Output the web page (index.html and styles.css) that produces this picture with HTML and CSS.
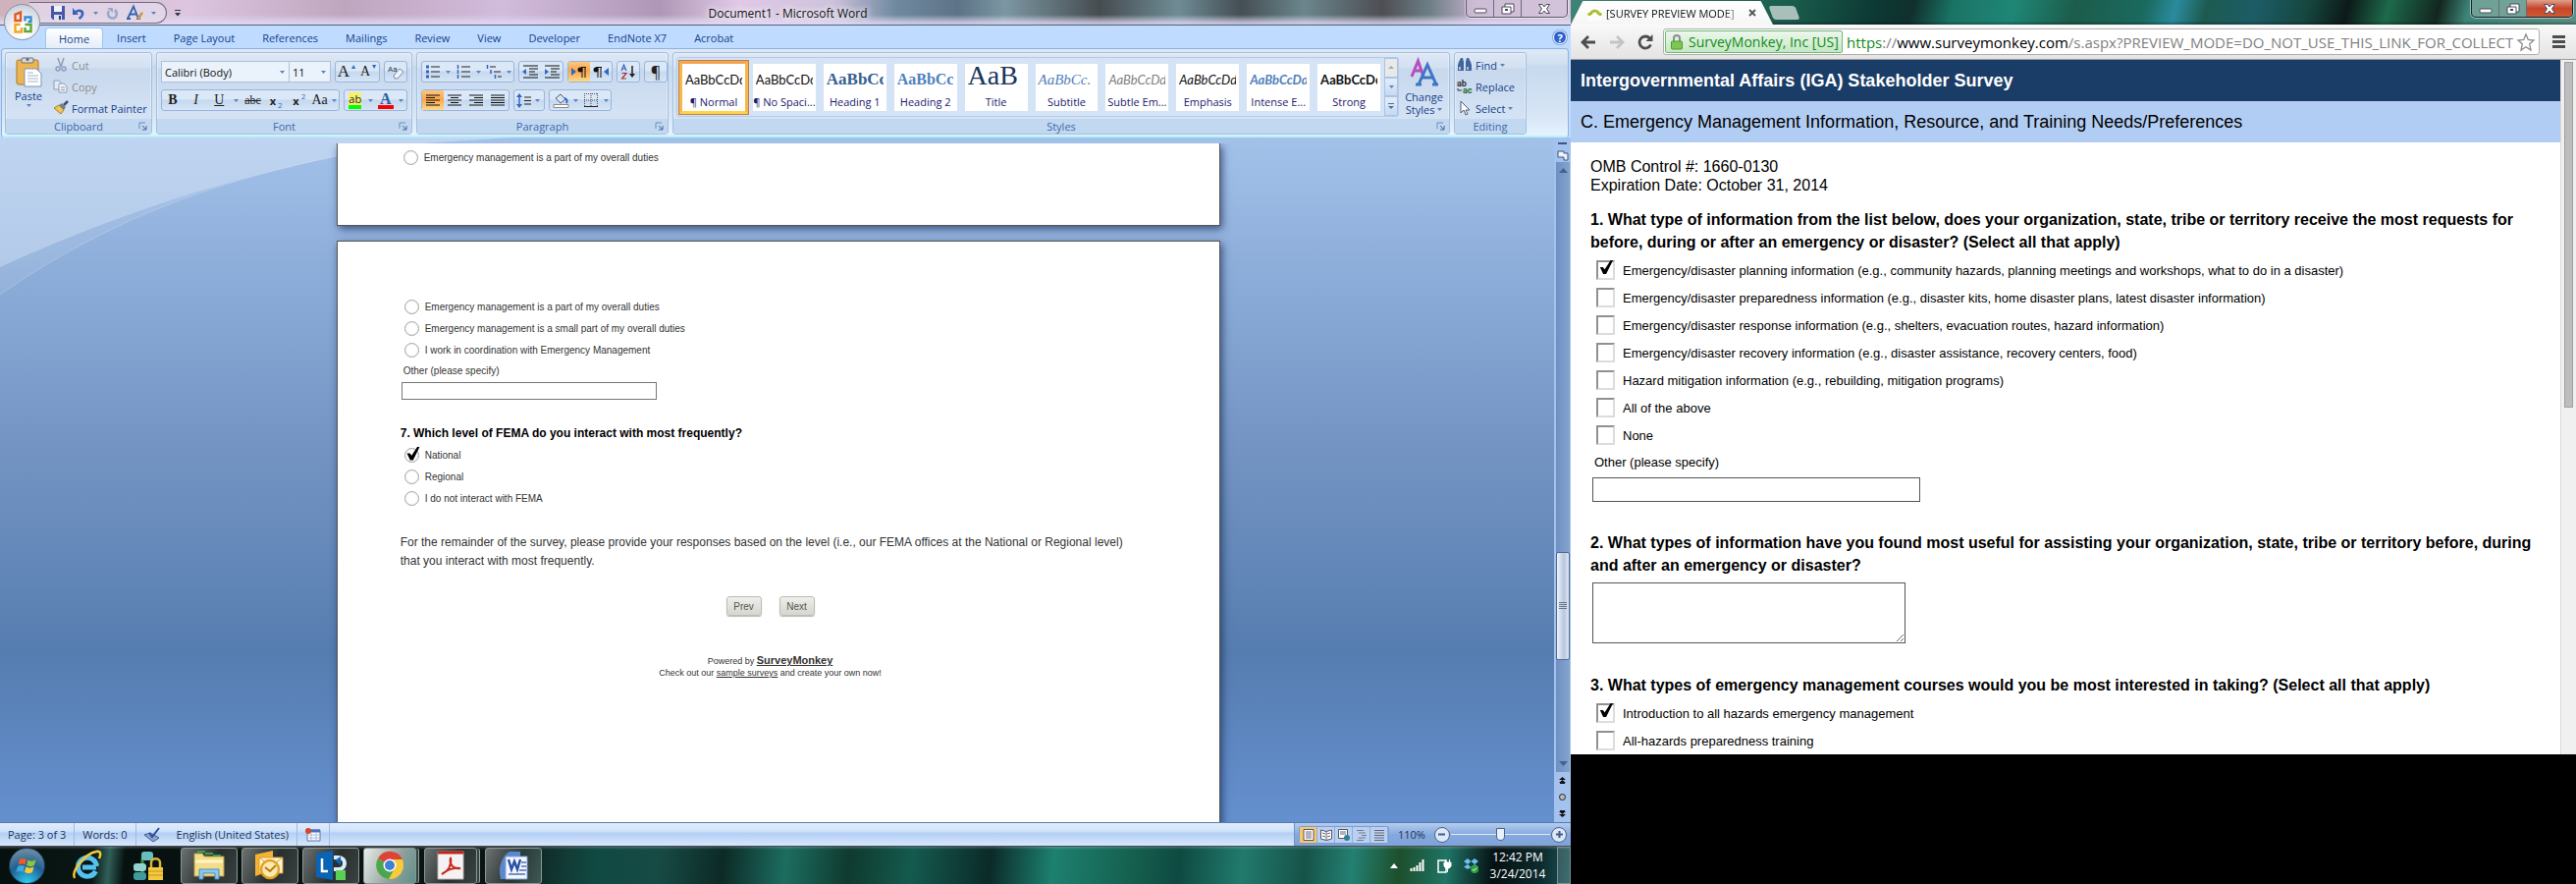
FILE: index.html
```html
<!DOCTYPE html>
<html lang="en">
<head>
    <meta charset="UTF-8">
    <meta name="viewport" content="width=device-width, initial-scale=1.0">
    <title>Document1 - Microsoft Word</title>
    <link rel="stylesheet" href="styles.css">
</head>
<body>
    <!-- shared icons -->
    <svg class="defs" aria-hidden="true">
        <symbol id="arrow" viewBox="0 0 5 3"><path d="M0 0h5L2.5 3z" fill="#5d84b8"/></symbol>
        <symbol id="launcher" viewBox="0 0 9 9"><path d="M1 7V1h6" fill="none" stroke="#6a8fbd"/><path d="M4 4l4 4M8 4v4H4" fill="none" stroke="#44668f"/></symbol>
        <symbol id="al-left" viewBox="0 0 14 12"><path d="M0 1h14M0 3.500h9M0 6h14M0 8.500h9M0 11h14" stroke="#111"/></symbol>
        <symbol id="al-center" viewBox="0 0 14 12"><path d="M0 1h14M3 3.500h8M0 6h14M3 8.500h8M0 11h14" stroke="#111"/></symbol>
        <symbol id="al-right" viewBox="0 0 14 12"><path d="M0 1h14M5 3.500h9M0 6h14M5 8.500h9M0 11h14" stroke="#111"/></symbol>
        <symbol id="al-full" viewBox="0 0 14 12"><path d="M0 1h14M0 3.500h14M0 6h14M0 8.500h14M0 11h14" stroke="#111"/></symbol>
        <symbol id="win-min" viewBox="0 0 14 12"><rect x="1" y="6" width="12" height="4" rx="1" fill="#fff" stroke="#4c4a5c"/></symbol>
        <symbol id="win-max" viewBox="0 0 14 12"><path d="M4 1h9v8h-3v2H1V4h3z" fill="#fff" stroke="#4c4a5c"/><path d="M4 4h6v5" fill="none" stroke="#4c4a5c"/><rect x="4" y="6" width="3" height="2" fill="#4c4a5c"/></symbol>
        <symbol id="win-close" viewBox="0 0 14 12"><path d="M1.500 1.500h3.500l2 2.500 2-2.500h3.500L9.500 6l3 4.500H9L7 8l-2 2.500H1.500l3-4.500z" fill="#fff" stroke="#4c4a5c"/></symbol>
    </svg>

    <div class="desktop">
        <!-- left monitor -->
        <div class="monitor-left">
            <div class="word">
                <div class="word-title">
                    <button class="office-button" aria-label="Office Button">
                        <svg viewBox="0 0 20 24" width="20" height="24">
                            <g fill="none" stroke-width="2.400">
                                <path d="M8 10H2.500V3.500L8 1.500z" stroke="#e8561b"/>
                                <path d="M12.500 10.500V6.500h6v4.500h-3" stroke="#3b8ad8"/>
                                <path d="M7.500 14H2.500v7.500H9V17" stroke="#f5a51c"/>
                                <path d="M12.500 14h6v7h-6v-4" stroke="#5da63a"/>
                            </g>
                        </svg>
                    </button>
                    <div class="qat">
                        <button aria-label="Save"><svg width="14" height="14" viewBox="0 0 14 14"><path d="M0 0h14v14H2l-2-2z" fill="#4a55a8"/><path d="M3 0h8v6H3z" fill="#eef3fb"/><path d="M3 9h8v5H3z" fill="#dce4f2"/><path d="M8 10h2v4H8z" fill="#2d3578"/></svg></button>
                        <button aria-label="Undo"><svg width="13" height="13" viewBox="0 0 13 13"><path d="M2 6c4-4 9-2 8 2-.5 2-2 3-3.500 4" fill="none" stroke="#3762b8" stroke-width="2.500"/><path d="M0 1v7h6z" fill="#3762b8"/></svg></button>
                        <svg class="arrow"><use href="#arrow"/></svg>
                        <button aria-label="Repeat"><svg width="13" height="13" viewBox="0 0 13 13"><path d="M9 3c4 4 1 9-3 8.500S1 7 3 4" fill="none" stroke="#9aa9c9" stroke-width="2.500"/><path d="M1 1h6v5z" fill="#9aa9c9"/></svg></button>
                        <button aria-label="Font colour"><svg width="17" height="16" viewBox="0 0 17 16"><path d="M1 14L7 1.500l5 12.500M3.500 9.500h6.500M0 14h4M10 14h4" fill="none" stroke="#3564ae" stroke-width="1.800"/><path d="M10 14l5-7 2 1-4 7z" fill="#c79a4a"/></svg></button>
                        <svg class="arrow"><use href="#arrow"/></svg>
                    </div>
                    <svg class="qat-more" width="6" height="7" viewBox="0 0 6 7"><path d="M0 .5h6" stroke="#334"/><path d="M0 3h6L3 6.500z" fill="#334"/></svg>
                    <h1 class="word-caption">Document1 - Microsoft Word</h1>
                    <div class="win-buttons">
                        <button aria-label="Minimize"><svg width="14" height="12"><use href="#win-min"/></svg></button>
                        <button aria-label="Restore"><svg width="14" height="12"><use href="#win-max"/></svg></button>
                        <button class="close" aria-label="Close"><svg width="14" height="12"><use href="#win-close"/></svg></button>
                    </div>
                </div>

                <nav class="tabs">
                    <button class="tab active">Home</button>
                    <button class="tab">Insert</button>
                    <button class="tab">Page Layout</button>
                    <button class="tab">References</button>
                    <button class="tab">Mailings</button>
                    <button class="tab">Review</button>
                    <button class="tab">View</button>
                    <button class="tab">Developer</button>
                    <button class="tab">EndNote X7</button>
                    <button class="tab">Acrobat</button>
                    <button class="help" aria-label="Help">?</button>
                </nav>

                <div class="ribbon">
                    <section class="group clipboard">
                        <div class="group-body">
                            <button class="big paste">
                                <svg width="27" height="31" viewBox="0 0 27 31"><rect x="1" y="3" width="22" height="25" rx="2" fill="#edb552" stroke="#a8792c"/><rect x="6" y="1" width="12" height="5" rx="1" fill="#d8d8dc" stroke="#6e6e74"/><circle cx="12" cy="2.500" r="1.500" fill="#666"/><path d="M9 12h12l5 5v13H9z" fill="#fff" stroke="#7d93b8"/><path d="M12 16h6M12 19h11M12 22h11M12 25h11" stroke="#9fb2d3"/></svg>
                                Paste
                                <svg class="arrow"><use href="#arrow"/></svg>
                            </button>
                            <div class="lines">
                                <button class="line off"><svg width="16" height="14" viewBox="0 0 16 14"><path d="M5 0l3 9M11 0L8 9" stroke="#8e9db8" stroke-width="1.500"/><circle cx="5" cy="11" r="2" fill="none" stroke="#8e9db8" stroke-width="1.500"/><circle cx="11" cy="11" r="2" fill="none" stroke="#8e9db8" stroke-width="1.500"/></svg>Cut</button>
                                <button class="line off"><svg width="16" height="14" viewBox="0 0 16 14"><path d="M1 1h5l3 3v6H1z" fill="#e4ebf5" stroke="#8e9db8"/><path d="M6 4h5l3 3v6H6z" fill="#eef2f9" stroke="#8e9db8"/><path d="M8 8h4M8 10.500h4" stroke="#8e9db8"/></svg>Copy</button>
                                <button class="line"><svg width="16" height="14" viewBox="0 0 16 14"><path d="M1 7l5-3 5 5-3 4z" fill="#efc657" stroke="#a88027"/><path d="M6 4l3-2 4 4-2 3z" fill="#777f8e"/><path d="M11 4l4-4" stroke="#3c4e75" stroke-width="2.500"/></svg>Format Painter</button>
                            </div>
                        </div>
                        <div class="group-label">Clipboard<svg class="launcher"><use href="#launcher"/></svg></div>
                    </section>

                    <section class="group font">
                        <div class="group-body rows">
                            <div class="row">
                                <div class="combo">
                                    <select class="font-name" aria-label="Font"><option>Calibri (Body)</option></select>
                                    <svg class="arrow"><use href="#arrow"/></svg>
                                    <select class="font-size" aria-label="Font size"><option>11</option></select>
                                    <svg class="arrow"><use href="#arrow"/></svg>
                                </div>
                                <div class="bar">
                                    <button class="serif big-a" aria-label="Grow font">A<sup>▴</sup></button>
                                    <button class="serif" aria-label="Shrink font">A<sup>▾</sup></button>
                                </div>
                                <div class="bar">
                                    <button aria-label="Clear formatting"><svg width="18" height="16" viewBox="0 0 18 16"><text x="1" y="8" font-size="8" font-family="Roboto" fill="#234">Aa</text><path d="M7 12l6-7 4 3-6 7H8z" fill="#f0f3fa" stroke="#7c86a8"/></svg></button>
                                </div>
                            </div>
                            <div class="row">
                                <div class="bar format">
                                    <button class="serif"><b>B</b></button>
                                    <button class="serif"><i>I</i></button>
                                    <button class="serif"><u>U</u></button>
                                    <svg class="arrow"><use href="#arrow"/></svg>
                                    <button class="serif small"><s>abc</s></button>
                                    <button><b>x</b><sub>2</sub></button>
                                    <button><b>x</b><sup>2</sup></button>
                                    <button class="serif">Aa<svg class="arrow"><use href="#arrow"/></svg></button>
                                </div>
                                <div class="bar colours">
                                    <button class="highlight" aria-label="Highlight"><span>ab</span></button>
                                    <svg class="arrow"><use href="#arrow"/></svg>
                                    <button class="text-colour" aria-label="Font color"><span>A</span></button>
                                    <svg class="arrow"><use href="#arrow"/></svg>
                                </div>
                            </div>
                        </div>
                        <div class="group-label">Font<svg class="launcher"><use href="#launcher"/></svg></div>
                    </section>

                    <section class="group paragraph">
                        <div class="group-body rows">
                            <div class="row">
                                <div class="bar lists">
                                    <button aria-label="Bullets"><svg width="14" height="14" viewBox="0 0 14 14"><path d="M5 2h9M5 7h9M5 12h9" stroke="#222"/><path d="M0 2h3M0 7h3M0 12h3" stroke="#3762b8" stroke-width="3"/></svg></button>
                                    <svg class="arrow"><use href="#arrow"/></svg>
                                    <button aria-label="Numbering"><svg width="14" height="14" viewBox="0 0 14 14"><path d="M5 2h9M5 7h9M5 12h9" stroke="#222"/><path d="M1.500 0v4M1.500 5v4M1.500 10v4" stroke="#3762b8" stroke-width="1.500"/></svg></button>
                                    <svg class="arrow"><use href="#arrow"/></svg>
                                    <button aria-label="Multilevel list"><svg width="16" height="14" viewBox="0 0 16 14"><path d="M4 2h6M8 7h7M12 12h4" stroke="#222"/><path d="M1.500 0v4M5 5v4M9.500 10v4" stroke="#3762b8" stroke-width="1.500"/></svg></button>
                                    <svg class="arrow"><use href="#arrow"/></svg>
                                </div>
                                <div class="bar">
                                    <button aria-label="Decrease indent"><svg width="16" height="14" viewBox="0 0 16 14"><path d="M1 1h15M7 4h9M7 7h6M7 10h9M1 13h15" stroke="#111"/><path d="M0 7l4-3v6z" fill="#2e68c4"/></svg></button>
                                    <button aria-label="Increase indent"><svg width="16" height="14" viewBox="0 0 16 14"><path d="M1 1h15M7 4h9M7 7h6M7 10h9M1 13h15" stroke="#111"/><path d="M5 7L1 4v6z" fill="#2e68c4"/></svg></button>
                                </div>
                                <div class="bar">
                                    <button class="on" aria-label="Left to right"><svg width="16" height="12" viewBox="0 0 16 12"><path d="M0 2l5 4-5 4z" fill="#2e68c4"/><path d="M10 1.500h5M11 1v11M14 1v11" stroke="#111"/><circle cx="9" cy="4" r="2.500" fill="#111"/></svg></button>
                                    <button aria-label="Right to left"><svg width="16" height="12" viewBox="0 0 16 12"><path d="M16 2l-5 4 5 4z" fill="#2e68c4"/><path d="M3 1.500h6M5 1v11M8 1v11" stroke="#111"/><circle cx="3" cy="4" r="2.500" fill="#111"/></svg></button>
                                </div>
                                <div class="bar">
                                    <button aria-label="Sort"><svg width="16" height="16" viewBox="0 0 16 16"><path d="M1 7l2.500-6L6 7M2 5h3" fill="none" stroke="#3762b8" stroke-width="1.200"/><path d="M1.500 9.500H6l-4.500 5.500H6" fill="none" stroke="#a2372f" stroke-width="1.200"/><path d="M12 2v10" stroke="#222" stroke-width="1.500"/><path d="M9 10h6l-3 4z" fill="#222"/></svg></button>
                                </div>
                                <div class="bar">
                                    <button class="pilcrow" aria-label="Show marks">¶</button>
                                </div>
                            </div>
                            <div class="row">
                                <div class="bar">
                                    <button class="on" aria-label="Align left"><svg width="14" height="12"><use href="#al-left"/></svg></button>
                                    <button aria-label="Center"><svg width="14" height="12"><use href="#al-center"/></svg></button>
                                    <button aria-label="Align right"><svg width="14" height="12"><use href="#al-right"/></svg></button>
                                    <button aria-label="Justify"><svg width="14" height="12"><use href="#al-full"/></svg></button>
                                </div>
                                <div class="bar">
                                    <button class="wide" aria-label="Line spacing"><svg width="15" height="15" viewBox="0 0 15 15"><path d="M3 3v9" stroke="#2e68c4" stroke-width="1.500"/><path d="M0 4l3-4 3 4zM0 11l3 4 3-4z" fill="#2e68c4"/><path d="M8 4h7M8 7.500h7M8 11h7" stroke="#222"/></svg><svg class="arrow"><use href="#arrow"/></svg></button>
                                </div>
                                <div class="bar shading">
                                    <button aria-label="Shading"><svg width="17" height="16" viewBox="0 0 17 16"><path d="M3 6l5-4 5 5-5 4z" fill="#dbe6f5" stroke="#4a5a78"/><path d="M12 6c3 1 3 3 2 5" stroke="#2e68c4" stroke-width="2" fill="none"/><path d="M1 12.500h15v3H1z" fill="#fff" stroke="#888"/></svg></button>
                                    <svg class="arrow"><use href="#arrow"/></svg>
                                    <button aria-label="Borders"><svg width="14" height="14" viewBox="0 0 14 14"><path d="M.5 0v14M7 0v14M13.500 0v14M0 .5h14M0 7h14" stroke="#555" stroke-dasharray="1 1"/><path d="M0 13.500h14" stroke="#222"/></svg></button>
                                    <svg class="arrow"><use href="#arrow"/></svg>
                                </div>
                            </div>
                        </div>
                        <div class="group-label">Paragraph<svg class="launcher"><use href="#launcher"/></svg></div>
                    </section>

                    <section class="group styles">
                        <div class="group-body">
                            <div class="gallery">
                                <button class="style selected"><span class="sample">AaBbCcDd</span><span class="name">¶ Normal</span></button>
                                <button class="style"><span class="sample">AaBbCcDd</span><span class="name">¶ No Spaci...</span></button>
                                <button class="style"><span class="sample s-h1">AaBbCc</span><span class="name">Heading 1</span></button>
                                <button class="style"><span class="sample s-h2">AaBbCc</span><span class="name">Heading 2</span></button>
                                <button class="style"><span class="sample s-title">AaB</span><span class="name">Title</span></button>
                                <button class="style"><span class="sample s-sub">AaBbCc.</span><span class="name">Subtitle</span></button>
                                <button class="style"><span class="sample s-subtle">AaBbCcDd</span><span class="name">Subtle Em...</span></button>
                                <button class="style"><span class="sample s-em">AaBbCcDd</span><span class="name">Emphasis</span></button>
                                <button class="style"><span class="sample s-intense">AaBbCcDd</span><span class="name">Intense E...</span></button>
                                <button class="style"><span class="sample s-strong">AaBbCcDd</span><span class="name">Strong</span></button>
                                <div class="gallery-scroll">
                                    <button class="dim" aria-label="Up"><svg width="6" height="3" viewBox="0 0 6 3"><path d="M0 3h6L3 0z" fill="#aaa"/></svg></button>
                                    <button aria-label="Down"><svg class="arrow"><use href="#arrow"/></svg></button>
                                    <button aria-label="More"><svg width="6" height="6" viewBox="0 0 6 6"><path d="M0 .5h6" stroke="#4a70a8"/><path d="M0 3h6L3 6z" fill="#4a70a8"/></svg></button>
                                </div>
                            </div>
                            <button class="big change">
                                <svg width="30" height="28" viewBox="0 0 30 28"><path d="M2 18L8.500 2 14 18M4 12h8" fill="none" stroke="#b44fbe" stroke-width="3"/><path d="M9 26L18 6l9 20M12 19h12M6 26h6M23 26h6" fill="none" stroke="#3f76c4" stroke-width="3"/></svg>
                                <span>Change</span>
                                <span>Styles <svg class="arrow"><use href="#arrow"/></svg></span>
                            </button>
                        </div>
                        <div class="group-label">Styles<svg class="launcher"><use href="#launcher"/></svg></div>
                    </section>

                    <section class="group editing">
                        <div class="group-body">
                            <div class="lines">
                                <button class="line"><svg width="16" height="14" viewBox="0 0 16 14"><path d="M2 4l2-4h2l1 4v9H1V7zM9 4l1-4h2l2 4 1 3v6H9z" fill="#41659c"/><path d="M3 9v3M11 9v3" stroke="#cfdcf0" stroke-width="1.500"/></svg>Find <svg class="arrow"><use href="#arrow"/></svg></button>
                                <button class="line"><svg width="16" height="14" viewBox="0 0 16 14"><text x="0" y="7" font-size="9" font-weight="700" font-family="Roboto" fill="#333">ab</text><text x="6" y="14" font-size="9" font-weight="700" font-family="Roboto" fill="#1c6b2a">ac</text><path d="M1 9v2h4" fill="none" stroke="#335"/></svg>Replace</button>
                                <button class="line"><svg width="16" height="14" viewBox="0 0 16 14"><path d="M4 0v12l3-3 2 5 2-1-2-4h4z" fill="#fff" stroke="#4a5a78"/></svg>Select <svg class="arrow"><use href="#arrow"/></svg></button>
                            </div>
                        </div>
                        <div class="group-label">Editing</div>
                    </section>
                </div>

                <div class="workspace">
                    <svg class="swoosh" width="520" height="170" viewBox="0 0 520 170">
                        <path d="M0 160C130 70 250 35 400 8L520 0H0z" fill="#fff" fill-opacity=".1"/>
                        <path d="M0 132C130 73 250 35 400 8L520 0H0z" fill="#d8e6f8" fill-opacity=".42"/>
                        <path d="M0 160C130 70 250 35 400 8" fill="none" stroke="#fff" stroke-opacity=".2"/>
                    </svg>
                    <div class="pages">
                        <article class="page first">
                            <label class="choice"><input type="radio" name="duty-prev">Emergency management is a part of my overall duties</label>
                        </article>
                        <article class="page second">
                            <label class="choice"><input type="radio" name="duty">Emergency management is a part of my overall duties</label>
                            <label class="choice"><input type="radio" name="duty">Emergency management is a small part of my overall duties</label>
                            <label class="choice"><input type="radio" name="duty">I work in coordination with Emergency Management</label>
                            <label class="other" for="duty-other">Other (please specify)</label>
                            <input class="textbox" type="text" id="duty-other">
                            <h2>7. Which level of FEMA do you interact with most frequently?</h2>
                            <label class="choice"><input type="radio" name="level" checked>National</label>
                            <label class="choice"><input type="radio" name="level">Regional</label>
                            <label class="choice"><input type="radio" name="level">I do not interact with FEMA</label>
                            <p class="note">For the remainder of the survey, please provide your responses based on the level (i.e., our FEMA offices at the National or Regional level) that you interact with most frequently.</p>
                            <div class="pager">
                                <button>Prev</button>
                                <button>Next</button>
                            </div>
                            <footer class="powered">
                                <p>Powered by <a class="brand" href="#">SurveyMonkey</a></p>
                                <p>Check out our <a href="#">sample surveys</a> and create your own now!</p>
                            </footer>
                        </article>
                    </div>
                    <div class="word-scroll">
                        <span class="split"></span>
                        <button class="ruler" aria-label="View ruler"><svg width="12" height="12" viewBox="0 0 12 12"><path d="M1 2h6v2h4v7H7V8H1z" fill="#eef3fb" stroke="#3d5580"/></svg></button>
                        <div class="track">
                            <svg width="9" height="5" viewBox="0 0 9 5"><path d="M0 5h9L4.500 0z" fill="#47618f"/></svg>
                            <div class="thumb"><i></i></div>
                            <svg width="9" height="5" viewBox="0 0 9 5"><path d="M0 0h9L4.500 5z" fill="#47618f"/></svg>
                        </div>
                        <button aria-label="Previous page"><svg width="7" height="7" viewBox="0 0 7 7"><path d="M3.500 0L7 3H0zM3.500 3L7 6H0zM1 6h5v1H1z" fill="#111"/></svg></button>
                        <button aria-label="Browse object"><svg width="7" height="7" viewBox="0 0 7 7"><circle cx="3.500" cy="3.500" r="3" fill="#bbb" stroke="#222"/></svg></button>
                        <button aria-label="Next page"><svg width="7" height="7" viewBox="0 0 7 7"><path d="M3.500 7L7 4H0zM3.500 4L7 1H0zM1 0h5v1H1z" fill="#111"/></svg></button>
                    </div>
                </div>

                <div class="statusbar">
                    <span class="cell">Page: 3 of 3</span>
                    <span class="cell">Words: 0</span>
                    <span class="cell proof"><svg width="17" height="14" viewBox="0 0 17 14"><path d="M0 7l6-2 9 5-6 4z" fill="#8fa6cf" stroke="#44598a"/><path d="M5 5l3 4 7-9" fill="none" stroke="#2c4f9c" stroke-width="2"/></svg></span>
                    <span class="cell">English (United States)</span>
                    <span class="cell"><svg width="16" height="14" viewBox="0 0 16 14"><path d="M2 2h13v11H2z" fill="#fff" stroke="#5c77a8"/><path d="M2 3h13" stroke="#4a6fb5" stroke-width="3"/><path d="M2 7h13M2 10h13M6 4v9M11 4v9" stroke="#a9bbd9"/><circle cx="3" cy="3" r="3" fill="#d8452c"/></svg></span>
                    <div class="view-tools">
                        <div class="views">
                            <button class="on" aria-label="Print layout"><svg width="12" height="12" viewBox="0 0 12 12"><path d="M1 .5h10v11H1z" fill="#fff" stroke="#556"/><path d="M3 3h6M3 5h6M3 7h6M3 9h6" stroke="#667"/></svg></button>
                            <button aria-label="Reading"><svg width="12" height="12" viewBox="0 0 12 12"><path d="M.5 1l5.500 1.500L11.500 1v9L6 11.500.5 10z" fill="#fff" stroke="#556"/><path d="M6 2v9M2 4l3 1M2 7l3 1M7 5l3-1M7 8l3-1" stroke="#667"/></svg></button>
                            <button aria-label="Web layout"><svg width="12" height="12" viewBox="0 0 12 12"><path d="M.5 .5h9v9h-9z" fill="#fff" stroke="#556"/><path d="M2 3h6M2 5h6" stroke="#667"/><circle cx="9" cy="9" r="3" fill="#2f7f9c"/></svg></button>
                            <button aria-label="Outline"><svg width="12" height="12" viewBox="0 0 12 12"><path d="M1 1.500h7M3 4h7M6 6.500h5M3 9h7M1 11.500h7" stroke="#778"/></svg></button>
                            <button aria-label="Draft"><svg width="12" height="12" viewBox="0 0 12 12"><path d="M1 1.500h10M1 4h10M1 6.500h10M1 9h10M1 11.500h10" stroke="#667"/></svg></button>
                        </div>
                        <span class="zoom-value">110%</span>
                        <button class="round" aria-label="Zoom out"><svg width="9" height="9" viewBox="0 0 9 9"><path d="M1 4.500h7" stroke="#445a80" stroke-width="2"/></svg></button>
                        <input class="zoom" type="range" min="0" max="100" value="50" aria-label="Zoom">
                        <button class="round" aria-label="Zoom in"><svg width="9" height="9" viewBox="0 0 9 9"><path d="M1 4.500h7M4.500 1v7" stroke="#445a80" stroke-width="2"/></svg></button>
                    </div>
                </div>
            </div>

            <div class="taskbar">
                <button class="start" aria-label="Start"><svg width="22" height="22" viewBox="0 0 22 22"><path d="M3 5c2-1.500 5-1.500 7 0L8.500 10.500c-2-1.500-4.500-1.500-7 0z" fill="#f05a28"/><path d="M11.500 5.500c2 1.500 5 1.500 8 0L18 11c-2.500 1.500-5 1.500-8 0z" fill="#8cc63e"/><path d="M1 12c2.500-1.500 5-1.500 7 0l-1.500 6c-2-1.500-4.500-1.500-7 0z" fill="#3ea9e0"/><path d="M9.500 12.500c2.500 1.500 5 1.500 8 0L16 18c-2.500 1.500-5 1.500-8 0z" fill="#fdc82f"/></svg></button>
                <button class="launch" aria-label="Internet Explorer"><svg width="32" height="32" viewBox="0 0 32 32"><path d="M25 18H11M24.500 22a9.500 9.500 0 1 1 1-5" fill="none" stroke="#53c2f0" stroke-width="5"/><path d="M3 29C-1 22 14 4 25 2c5-1 5 3 3 7" fill="none" stroke="#f7c832" stroke-width="2.500"/></svg></button>
                <button class="launch" aria-label="Network lock"><svg width="32" height="32" viewBox="0 0 32 32"><path d="M10 9v16" stroke="#3a8f3e" stroke-width="3"/><rect x="9" y="2" width="12" height="9" rx="3" fill="#68bdbd"/><rect x="1" y="14" width="13" height="8" rx="3" fill="#8fd4d0"/><rect x="1" y="23" width="13" height="8" rx="3" fill="#3e9c9c"/><path d="M19 19v-6c0-5 9-5 9 0v6" fill="none" stroke="#d8b43a" stroke-width="2.500"/><rect x="16" y="18" width="15" height="13" fill="#f4c93c"/><path d="M16 22h15M16 26h15" stroke="#c4952a"/></svg></button>
                <button class="task" aria-label="Explorer"><svg width="34" height="32" viewBox="0 0 34 32"><path d="M2 4h8l2 3h20v20H2z" fill="#f3dc8a" stroke="#b99b46"/><path d="M5 2h8M13 4h8M21 6h8" stroke="#3f9e4a" stroke-width="2"/><path d="M3 12h28" stroke="#fff3c0" stroke-width="3"/><path d="M7 30V20h20v10h-4v-6H11v6z" fill="#8cc8ee" stroke="#4b8cc0"/></svg></button>
                <button class="task" aria-label="Outlook"><svg width="34" height="32" viewBox="0 0 34 32"><path d="M2 5l18-4v20L2 27z" fill="#f6b330"/><path d="M6 8h24v16H6z" fill="#fff6da" stroke="#d99a26"/><path d="M6 8l12 9 12-9" fill="none" stroke="#d99a26"/><circle cx="17" cy="20" r="9" fill="#fde9b0" stroke="#e3a021" stroke-width="2.500"/><path d="M12 18l5 4 6-6" fill="none" stroke="#b77a18" stroke-width="2"/></svg></button>
                <button class="task" aria-label="Lync"><svg width="32" height="32" viewBox="0 0 32 32"><path d="M1 4l17-3v30L1 28z" fill="#0a64b5"/><path d="M7 9v13h6" fill="none" stroke="#fff" stroke-width="2.500"/><path d="M19 8h5c8 0 8 12 0 12h-5" fill="none" stroke="#dcecfb" stroke-width="4"/><path d="M20 11l6-4v9z" fill="#0a64b5"/><path d="M21 21h10v10H21z" fill="#5ccf52"/></svg></button>
                <button class="task stack lit" aria-label="Chrome"><svg width="30" height="30" viewBox="0 0 30 30"><circle cx="15" cy="15" r="14" fill="#f7cb3a"/><path d="M15 15L3 8A14 14 0 0 1 28 9H15z" fill="#dc4437"/><path d="M15 15L3 8a14 14 0 0 0 11 21l6-11z" fill="#4aa651"/><circle cx="15" cy="15" r="6.500" fill="#fff"/><circle cx="15" cy="15" r="5" fill="#3f7fd6"/></svg></button>
                <button class="task stack" aria-label="Adobe Reader"><svg width="28" height="30" viewBox="0 0 28 30"><path d="M1 1h26v28H1z" fill="#f4f2f2" stroke="#b8b4b4"/><path d="M1 2h26" stroke="#c0241c" stroke-width="3"/><path d="M5 24c8-4 10-11 9-17-2 8 4 12 10 11-6-1-13 1-19 6z" fill="none" stroke="#c9281f" stroke-width="2"/></svg></button>
                <button class="task" aria-label="Word"><svg width="32" height="30" viewBox="0 0 32 30"><path d="M3 29C0 17 4 6 12 1h11v28z" fill="#5b87d0"/><path d="M8 6h22v23H8z" fill="#f4f7fd" stroke="#7f9ed4"/><path d="M11 9l3 10 3-8 3 8 3-10" fill="none" stroke="#2a52a4" stroke-width="2.500"/><path d="M24 12h5M24 16h5M22 20h7M11 24h17" stroke="#4a70bc" stroke-width="1.500"/></svg></button>
                <div class="tray">
                    <svg width="8" height="5" viewBox="0 0 8 5"><path d="M0 5h8L4 0z" fill="#fff"/></svg>
                    <svg width="16" height="12" viewBox="0 0 16 12"><path d="M1.500 12v-3M4.500 12v-4M7.500 12V6M10.500 12V3M13.500 12V0" stroke="#fff" stroke-width="2"/></svg>
                    <svg width="15" height="15" viewBox="0 0 15 15"><path d="M1 2h8v12H1z" fill="none" stroke="#fff" stroke-width="1.500"/><path d="M7 4h7v4l-2 2H9L7 8zM8.500 1v3M12.500 1v3M10.500 10v4" fill="#fff" stroke="#fff"/></svg>
                    <svg width="15" height="15" viewBox="0 0 15 15"><path d="M4 0l3.500 3L4 6 0 3zM11 0l4 3-4 3-3.500-3zM4 6l3.500 3L4 11 0 8.500zM11 6l4 2.500-4 2.500-3.500-2z" fill="#6cc0f2"/><circle cx="11" cy="11" r="4" fill="#2ea33a"/><path d="M9 11l1.500 1.500L13 9.500" fill="none" stroke="#fff"/></svg>
                    <time class="clock"><span>12:42 PM</span><span>3/24/2014</span></time>
                    <button class="show-desktop" aria-label="Show desktop"></button>
                </div>
            </div>
        </div>

        <!-- right monitor -->
        <div class="monitor-right">
            <div class="browser">
                <div class="browser-top">
                    <div class="browser-tab">
                        <svg width="15" height="15" viewBox="0 0 15 15"><rect width="15" height="15" rx="2" fill="#fdfdfd"/><path d="M3.500 9a4 4 0 0 1 8 0" fill="none" stroke="#a9bf33" stroke-width="3"/><circle cx="2" cy="8.500" r="1.800" fill="#a9bf33"/><circle cx="13" cy="8.500" r="1.800" fill="#a9bf33"/></svg>
                        <span class="tab-text">[SURVEY PREVIEW MODE]</span>
                        <button aria-label="Close tab"><svg width="8" height="8" viewBox="0 0 8 8"><path d="M1 1l6 6M7 1L1 7" stroke="#555" stroke-width="1.800"/></svg></button>
                    </div>
                    <button class="new-tab" aria-label="New tab"></button>
                    <div class="win-buttons red">
                        <button aria-label="Minimize"><svg width="14" height="12"><use href="#win-min"/></svg></button>
                        <button aria-label="Restore"><svg width="14" height="12"><use href="#win-max"/></svg></button>
                        <button class="close" aria-label="Close"><svg width="14" height="12"><use href="#win-close"/></svg></button>
                    </div>
                </div>
                <div class="toolbar">
                    <button aria-label="Back"><svg width="16" height="14" viewBox="0 0 16 14"><path d="M15 7H3M8 1L2 7l6 6" fill="none" stroke="#4d4d4d" stroke-width="2.800"/></svg></button>
                    <button aria-label="Forward"><svg width="16" height="14" viewBox="0 0 16 14"><path d="M1 7h12M8 1l6 6-6 6" fill="none" stroke="#c3c3c3" stroke-width="2.800"/></svg></button>
                    <button aria-label="Reload"><svg width="16" height="16" viewBox="0 0 16 16"><path d="M12.500 4A6 6 0 1 0 13.500 10.500" fill="none" stroke="#4d4d4d" stroke-width="2.800"/><path d="M15.500 0v7h-7z" fill="#4d4d4d"/></svg></button>
                    <div class="omnibox">
                        <span class="badge"><svg width="12" height="16" viewBox="0 0 12 16"><path d="M3 8V4c0-4 6-4 6 0v4" fill="none" stroke="#8d8d8d" stroke-width="2"/><rect x=".5" y="7" width="11" height="8" rx="1" fill="#7fc552" stroke="#4f9a30"/></svg>SurveyMonkey, Inc [US]</span>
                        <a class="url" href="#"><em>https</em>://<b>www.surveymonkey.com</b>/s.aspx?PREVIEW_MODE=DO_NOT_USE_THIS_LINK_FOR_COLLECTION</a>
                        <svg width="18" height="18" viewBox="0 0 18 18"><path d="M9 1l2.300 5.500 5.700.5-4.300 3.800L14 17l-5-3.200L4 17l1.300-6.200L1 7l5.700-.5z" fill="#fff" stroke="#8a8a8a" stroke-width="1.300"/></svg>
                    </div>
                    <button aria-label="Menu"><svg width="13" height="13" viewBox="0 0 13 13"><path d="M0 1.500h13M0 6.500h13M0 11.500h13" stroke="#4d4d4d" stroke-width="3"/></svg></button>
                </div>
                <div class="viewport">
                    <main class="survey">
                        <h1>Intergovernmental Affairs (IGA) Stakeholder Survey</h1>
                        <h2>C. Emergency Management Information, Resource, and Training Needs/Preferences</h2>
                        <div class="questions">
                            <p class="omb">OMB Control #: 1660-0130<br>Expiration Date: October 31, 2014</p>
                            <h3>1. What type of information from the list below, does your organization, state, tribe or territory receive the most requests for before, during or after an emergency or disaster? (Select all that apply)</h3>
                            <label class="check"><input type="checkbox" checked>Emergency/disaster planning information (e.g., community hazards, planning meetings and workshops, what to do in a disaster)</label>
                            <label class="check"><input type="checkbox">Emergency/disaster preparedness information (e.g., disaster kits, home disaster plans, latest disaster information)</label>
                            <label class="check"><input type="checkbox">Emergency/disaster response information (e.g., shelters, evacuation routes, hazard information)</label>
                            <label class="check"><input type="checkbox">Emergency/disaster recovery information (e.g., disaster assistance, recovery centers, food)</label>
                            <label class="check"><input type="checkbox">Hazard mitigation information (e.g., rebuilding, mitigation programs)</label>
                            <label class="check"><input type="checkbox">All of the above</label>
                            <label class="check"><input type="checkbox">None</label>
                            <label class="check-other" for="info-other">Other (please specify)</label>
                            <input class="textbox" type="text" id="info-other">
                            <h3><label for="useful">2. What types of information have you found most useful for assisting your organization, state, tribe or territory before, during and after an emergency or disaster?</label></h3>
                            <textarea id="useful"></textarea>
                            <h3>3. What types of emergency management courses would you be most interested in taking? (Select all that apply)</h3>
                            <label class="check"><input type="checkbox" checked>Introduction to all hazards emergency management</label>
                            <label class="check"><input type="checkbox">All-hazards preparedness training</label>
                        </div>
                    </main>
                    <div class="page-scroll"><div class="page-thumb"></div></div>
                </div>
            </div>
        </div>
    </div>
</body>
</html>
```
FILE: styles.css
```css
* {
    margin: 0;
    padding: 0;
    box-sizing: border-box;
}

body {
    font-family: "Open Sans", "Noto Sans", sans-serif;
    font-size: 11px;
    background: #000;
    color: #15428b;
}

button, input, select, textarea {
    font: inherit;
    color: inherit;
    border: 0;
    background: none;
    border-radius: 0;
}

button {
    display: flex;
    align-items: center;
    justify-content: center;
    white-space: nowrap;
}

svg {
    flex: none;
    overflow: visible;
}

.defs {
    position: absolute;
    width: 0;
    height: 0;
}

.arrow {
    width: 5px;
    height: 3px;
}

.desktop {
    display: grid;
    grid-template-columns: 25fr 16fr;
    height: 100vh;
    overflow: hidden;
}

.monitor-left {
    display: flex;
    flex-direction: column;
    min-width: 0;
    min-height: 0;
}

/* ---------- Word ---------- */

.word {
    flex: 1;
    display: flex;
    flex-direction: column;
    min-height: 0;
    background: #bfdbff;
}

.word-title {
    position: relative;
    display: flex;
    height: 26px;
    padding-left: 30px;
    background:
        linear-gradient(rgba(255, 255, 255, 0.1) 60%, rgba(226, 220, 244, 0.8) 92%),
        linear-gradient(90deg, #c9a9b4 0, #d9bfdc 12%, #b89cb8 22%, #cdb4d8 32%, #a58cae 42%, #dcc3e4 47%, #c9bcd8 53%, #5f7c95 57%, #4b6379 61%, #6d8b98 64%, #30383c 70%, #5f7f8a 75%, #2f3a40 79%, #5a7880 83%, #393a40 88%, #5d7078 91%, #b9a6c4 94%, #cdbbd4 100%);
    border-bottom: 1px solid #57617c;
}

.office-button {
    position: absolute;
    left: 4px;
    top: 4px;
    z-index: 1;
    width: 37px;
    height: 37px;
    border-radius: 50%;
    background: radial-gradient(circle at 50% 75%, #fff 20%, #dfe3ea 60%, #b9c1ce);
    border: 1px solid #8791a5;
}

.qat {
    display: flex;
    align-items: center;
    gap: 8px;
    height: 22px;
    margin-top: 2px;
    padding: 0 10px 0 22px;
    border: 1px solid #6d6f80;
    border-left: 0;
    border-radius: 0 11px 11px 0;
    background: rgba(228, 219, 236, 0.75);
}

.qat-more {
    margin: 10px 0 0 8px;
}

.word-caption {
    flex: 1;
    padding: 5px 72px 0 0;
    font-size: 12px;
    font-weight: 400;
    line-height: 18px;
    text-align: center;
    color: #111;
    text-shadow: 0 0 6px #fff, 0 0 8px #fff;
}

.win-buttons {
    display: flex;
    height: 18px;
    margin-right: 3px;
    border: 1px solid #5d566c;
    border-top: 0;
    border-radius: 0 0 5px 5px;
    background: rgba(214, 196, 220, 0.6);
    box-shadow: 0 0 0 1px rgba(255, 255, 255, 0.5);
    overflow: hidden;
}

.win-buttons button {
    width: 28px;
    border-right: 1px solid #6f687e;
}

.win-buttons .close {
    width: 46px;
    border-right: 0;
}

.tabs {
    display: flex;
    height: 23px;
    padding: 2px 4px 0 46px;
}

.tab {
    padding: 0 14px;
}

.tab.active {
    background: linear-gradient(#fff, #e3edf9);
    border: 1px solid #9cc8ea;
    border-bottom: 0;
    border-radius: 4px 4px 0 0;
    padding: 0 13px;
}

.help {
    width: 14px;
    height: 14px;
    margin: 3px 0 0 auto;
    border-radius: 50%;
    border: 1px solid #fff;
    background: #2b5fd0;
    box-shadow: 0 0 0 1px #8aa5d6;
    color: #fff;
    font-weight: 700;
}

.ribbon {
    display: flex;
    gap: 4px;
    height: 91px;
    margin: 0 2px 0 1px;
    padding: 3px 42px 1px 3px;
    background: linear-gradient(#dfe9f5 0, #cfdff0 18%, #c6d9ee 20%, #d9e7f6 80%, #e4f3ff);
    border: 1px solid #8db2e3;
    border-bottom: 2px solid #b9f0fb;
    border-radius: 4px;
    box-shadow: 0 1px 0 #8fb0d8;
}

.group {
    display: flex;
    flex-direction: column;
    border: 1px solid #a3c0df;
    border-radius: 3px;
    background: linear-gradient(#dee8f5 0, #d3e0f1 18%, #c8d8ed 20%, #d8e6f6);
    box-shadow: inset 0 0 0 1px rgba(255, 255, 255, 0.35);
    min-width: 0;
}

.group-body {
    flex: 1;
    display: flex;
}

.group-body.rows {
    flex-direction: column;
    gap: 7px;
    padding: 8px 4px 0 4px;
}

.group-label {
    position: relative;
    height: 15px;
    line-height: 16px;
    text-align: center;
    background: #c1d8f0;
    color: #3e6aaa;
}

.launcher {
    position: absolute;
    right: 4px;
    top: 3px;
    width: 9px;
    height: 9px;
}

.clipboard { width: 150px; }
.font { width: 261px; }
.paragraph { width: 257px; }
.styles { flex: 1; }
.editing { width: 74px; }

.big {
    flex-direction: column;
    justify-content: flex-start;
    line-height: 13px;
}

.paste {
    width: 46px;
    padding-top: 4px;
    gap: 2px;
}

.lines {
    display: flex;
    flex-direction: column;
    padding: 1px 0 0 2px;
}

.line {
    height: 22px;
    justify-content: flex-start;
    gap: 3px;
}

.line.off {
    color: #8d8d8d;
}

.row {
    display: flex;
    gap: 4px;
    height: 22px;
}

.combo {
    display: flex;
    align-items: center;
    width: 178px;
    background: #eaf2fb;
    border: 1px solid #abc1de;
    color: #111;
}

.combo select {
    appearance: none;
    height: 20px;
    padding-left: 3px;
}

.combo .arrow {
    margin-right: 4px;
}

.font-name {
    flex: 1;
}

.font-size {
    width: 33px;
    border-left: 1px solid #abc1de;
}

.bar {
    display: flex;
    align-items: center;
    border: 1px solid #98b6db;
    border-radius: 3px;
    background: linear-gradient(#dbe8f7 45%, #c5d8ef 50%, #d6e5f6);
    color: #222;
}

.bar button {
    height: 20px;
    min-width: 22px;
    gap: 2px;
}

.bar .arrow {
    margin: 0 2px;
}

.bar .on {
    background: linear-gradient(#fbc77e, #fda64a 45%, #fbd98c);
}

.bar sup, .bar sub {
    font-size: 8px;
    color: #2e68c4;
}

.bar sup { align-self: flex-start; }
.bar sub { align-self: flex-end; }

.serif {
    font-family: "Liberation Serif", serif;
    font-size: 14px;
}

.bar .small {
    font-size: 12px;
}

.bar .big-a {
    font-size: 17px;
}

.format {
    width: 184px;
    justify-content: space-between;
}

.colours {
    width: 66px;
}

.highlight span {
    height: 17px;
    line-height: 13px;
    border-bottom: 4px solid #00ff00;
    background: #f7f06d;
}

.text-colour span {
    width: 16px;
    height: 17px;
    line-height: 14px;
    font-family: "Liberation Serif", serif;
    font-size: 16px;
    font-weight: 700;
    border-bottom: 4px solid #ff0000;
    color: #2d579f;
}

.lists {
    width: 98px;
}

.pilcrow {
    font-size: 16px;
}

.bar .wide {
    width: 30px;
}

.gallery {
    display: flex;
    flex: 1;
    align-items: center;
    height: 61px;
    margin: 4px 0 0 3px;
    padding-left: 1px;
    border: 1px solid #b3cbea;
    border-radius: 3px;
    background: #d4e4f6;
    min-width: 0;
}

.style {
    flex-direction: column;
    justify-content: flex-start;
    flex: 1;
    min-width: 0;
    max-width: 72px;
    height: 56px;
    border: 4px solid transparent;
    background: #fff padding-box;
    color: #111;
    overflow: hidden;
}

.style.selected {
    border-color: #f3a64f #f8b54a #ffd34a #f8b54a;
    outline: 1px solid #b9824a;
    outline-offset: -1px;
}

.sample {
    width: 58px;
    height: 30px;
    padding-top: 4px;
    line-height: 24px;
    overflow: hidden;
    font-family: Lato, sans-serif;
    font-size: 13px;
    text-align: left;
}

.name {
    line-height: 18px;
    color: #1a1a6c;
}

.s-h1, .s-h2, .s-title, .s-sub {
    font-family: "Liberation Serif", "DejaVu Serif", serif;
}

.s-h1 { font-size: 17px; font-weight: 700; color: #365f91; }
.s-h2 { font-size: 16px; font-weight: 700; color: #4f81bd; }
.s-title { font-size: 28px; padding-top: 0; color: #17365d; }
.s-sub { font-size: 15px; font-style: italic; color: #4f81bd; }
.s-subtle { font-style: italic; color: #808080; }
.s-em { font-style: italic; }
.s-intense { font-style: italic; font-weight: 700; color: #4f81bd; }
.s-strong { font-weight: 700; }

.gallery-scroll {
    display: flex;
    flex-direction: column;
    width: 14px;
    height: 59px;
    margin-left: auto;
}

.gallery-scroll button {
    flex: 1;
    border: 1px solid #aac4e4;
    background: linear-gradient(#e4eefa, #c6d9f1);
}

.gallery-scroll .dim {
    background: #e9e9e9;
}

.change {
    width: 51px;
    padding-top: 6px;
}

.change svg:first-child {
    margin-bottom: 4px;
}

.change .arrow {
    vertical-align: middle;
}

/* ---------- document ---------- */

.workspace {
    position: relative;
    flex: 1;
    display: flex;
    min-height: 0;
    padding-top: 6px;
    background: linear-gradient(#a3c2ea, #8aaad7 22%, #7394c3 46%, #567db0 75%, #6590cf);
    border-bottom: 1px solid #567db1;
    overflow: hidden;
}

.swoosh {
    position: absolute;
    left: 0;
    top: 0;
}

.pages {
    position: relative;
    flex: 1;
    display: flex;
    flex-direction: column;
    align-items: center;
    gap: 15px;
    padding-left: 3px;
    overflow: hidden;
}

.page {
    flex: none;
    width: 57%;
    background: #fff;
    border: 1px solid #555;
    box-shadow: 2px 3px 8px rgba(20, 40, 80, 0.7);
    font-family: "Liberation Sans", Arial, sans-serif;
    font-size: 10px;
    color: #333;
}

.first {
    height: 84px;
    padding: 3px 67px;
    border-top: 0;
}

.second {
    min-height: 700px;
    padding: 55px 64px;
}

.choice {
    display: flex;
    align-items: center;
    gap: 6px;
    height: 22px;
}

.choice input {
    appearance: none;
    width: 15px;
    height: 15px;
    margin-left: 4px;
    border: 1px solid #a5a5a5;
    border-radius: 50%;
    background: radial-gradient(#fff 50%, #e2e2e2);
}

.first .choice input {
    margin-left: 0;
}

.choice input:checked::before,
.check input:checked::before {
    content: "";
    display: block;
    width: 15px;
    height: 14px;
    margin-top: -2px;
    background: #000;
    clip-path: polygon(12% 50%, 32% 50%, 44% 66%, 84% 0, 100% 0, 54% 100%, 34% 100%);
}

.other {
    display: block;
    padding-left: 3px;
    line-height: 22px;
}

.textbox {
    display: block;
    border: 1px solid #777;
}

.second .textbox {
    width: 260px;
    height: 18px;
    margin-left: 1px;
}

.second h2 {
    margin-top: 23px;
    font-size: 12px;
    line-height: 22px;
    color: #000;
}

.note {
    max-width: 750px;
    margin-top: 25px;
    font-size: 12px;
    line-height: 19px;
}

.pager {
    display: flex;
    justify-content: center;
    gap: 18px;
    margin: 26px 17px 0 0;
}

.pager button {
    width: 36px;
    height: 20px;
    border: 1px solid #bdbdb5;
    border-radius: 3px;
    background: linear-gradient(#efefeb, #d6d6cf);
    box-shadow: 0 1px 1px #bbb;
    color: #555;
}

.powered {
    margin: 39px 17px 0 0;
    font-size: 9px;
    line-height: 12px;
    text-align: center;
}

.powered a {
    color: inherit;
}

.powered .brand {
    font-size: 11px;
    font-weight: 700;
}

.word-scroll {
    display: flex;
    flex-direction: column;
    width: 17px;
    margin-top: -6px;
    background: #a4c2ee;
}

.split {
    width: 9px;
    height: 2px;
    margin: 5px 4px 4px;
    background: #3d5580;
}

.word-scroll button {
    height: 17px;
}

.word-scroll .ruler {
    height: 13px;
}

.track {
    flex: 1;
    display: flex;
    flex-direction: column;
    align-items: center;
    margin: 1px 1px 0 2px;
    padding: 6px 0;
    background: linear-gradient(90deg, #6e90c2, #84a4cf);
}

.thumb {
    display: flex;
    align-items: center;
    justify-content: center;
    width: 14px;
    height: 18%;
    margin: auto 0 103px;
    border: 1px solid #56698f;
    border-radius: 2px;
    background: linear-gradient(90deg, #eef2f8, #b6c7df 60%, #dfe7f2);
}

.thumb i {
    width: 8px;
    height: 8px;
    background: repeating-linear-gradient(#6d7686 0 1px, transparent 1px 2px);
}

.statusbar {
    display: flex;
    height: 23px;
    background: linear-gradient(#e2edfc 0, #d0e2fb 35%, #b4cff5 45%, #d7e7fc);
    color: #1d3457;
}

.cell {
    display: flex;
    align-items: center;
    padding: 0 8px;
    border-right: 1px solid #9cbce8;
}

.proof {
    border-right: 0;
}

.view-tools {
    display: flex;
    align-items: center;
    gap: 9px;
    width: 282px;
    margin-left: auto;
    padding: 0 4px;
    background: linear-gradient(#b5cdf0, #86a9dd 50%, #7ea3da);
    border-left: 1px solid #6f94cc;
}

.views {
    display: flex;
    border: 1px solid #7c9dcf;
    border-radius: 2px;
    background: #b9d0f1;
}

.views button {
    width: 18px;
    height: 16px;
    border-right: 1px solid #8eaddb;
}

.views .on {
    background: #fbc66b;
}

.round {
    flex: none;
    width: 16px;
    height: 16px;
    border: 1px solid #4a628c;
    border-radius: 50%;
    background: #dce8f8;
}

.zoom {
    appearance: none;
    flex: 1;
    min-width: 0;
    height: 14px;
    margin: 0 -8px;
    background: linear-gradient(#dfeafa, #dfeafa) center / 100% 1px no-repeat;
}

.zoom::-webkit-slider-thumb {
    appearance: none;
    width: 9px;
    height: 13px;
    background: #e8f0fb;
    border: 1px solid #4a628c;
    border-radius: 1px 1px 5px 5px;
}

/* ---------- taskbar ---------- */

.taskbar {
    display: flex;
    align-items: center;
    height: 39px;
    padding-left: 9px;
    border-top: 1px solid #444c55;
    background:
        linear-gradient(rgba(255, 255, 255, 0.2), transparent 8%),
        linear-gradient(95deg, #06100e 0, #0a1715 6%, #2f5f57 7%, #07110f 8%, #0a1513 32%, #123a35 36%, #0f4a42 38%, #174a44 42%, #0c2a26 46%, #1c6d60 50%, #0f3a2f 54%, #145a4e 58%, #0b2a28 63%, #1d8070 67%, #15604f 72%, #0e4a41 75%, #217a6d 79%, #165348 83%, #238072 86%, #1d4f2c 89%, #1f7466 92%, #061012 95%, #0c2b2e 98%, #1c555a);
}

.start {
    width: 37px;
    height: 37px;
    border-radius: 50%;
    background: radial-gradient(circle at 50% 100%, #2fd0f4, #1f5f94 50%, #6a8ba0 85%);
    border: 1px solid #1d3c55;
}

.launch {
    width: 62px;
}

.start + .launch {
    margin-left: 12px;
}

.task {
    width: 58px;
    height: 37px;
    margin-right: 4px;
    border: 1px solid #8b9692;
    border-radius: 3px;
    background: linear-gradient(115deg, rgba(255, 255, 255, 0.4), rgba(255, 255, 255, 0.12) 55%, rgba(255, 255, 255, 0.2));
}

.task.lit {
    background: linear-gradient(115deg, #e8ecea, #8fa09c 60%, #5d918d);
}

.launch + .task {
    margin-left: 2px;
}

.task.stack {
    width: 54px;
    margin-right: 8px;
    box-shadow: 3px 0 0 -1px #33433f, 4px 0 0 -1px #93a09c;
}

.tray {
    display: flex;
    align-items: center;
    gap: 12px;
    height: 38px;
    margin-left: auto;
}

.clock {
    display: flex;
    flex-direction: column;
    align-items: center;
    width: 56px;
    font-size: 12px;
    line-height: 17px;
    color: #fff;
}

.show-desktop {
    width: 14px;
    height: 38px;
    border: 1px solid #7c8f90;
    background: rgba(255, 255, 255, 0.15);
}

/* ---------- browser ---------- */

.monitor-right {
    display: grid;
    grid-template-rows: 64fr 11fr;
    min-width: 0;
    min-height: 0;
}

.browser {
    display: flex;
    flex-direction: column;
    min-height: 0;
    background: #fff;
    overflow: hidden;
}

.browser-top {
    display: flex;
    height: 25px;
    background:
        linear-gradient(transparent 85%, rgba(0, 0, 0, 0.3)),
        linear-gradient(105deg, #3f8378 0, #1a5c4c 22%, #0c3a34 30%, #10302d 34%, #1a7466 38%, #1f8676 44%, #1c5c4b 50%, #1a6a5f 57%, #2a8b9c 60%, #1d5b50 63%, #1c5c66 68%, #16463f 73%, #0c1a18 77%, #1d6a4c 81%, #12261f 86%, #3d8577 89%, #5a8f84 100%);
}

.browser-tab {
    display: flex;
    align-items: center;
    gap: 4px;
    width: 206px;
    margin-top: 1px;
    padding: 0 17px;
    background: linear-gradient(#fff, #f6f6f6);
    clip-path: polygon(6% 0, 94% 0, 100% 100%, 0 100%);
    color: #111;
}

.tab-text {
    flex: 1;
    overflow: hidden;
    white-space: nowrap;
    mask-image: linear-gradient(90deg, #000 85%, transparent);
}

.new-tab {
    width: 27px;
    height: 14px;
    margin: 6px auto 0 -2px;
    background: #a9c0ba;
    border-radius: 3px;
    transform: skewX(20deg);
}

.win-buttons.red {
    background: rgba(140, 180, 168, 0.6);
    border-color: #123;
}

.win-buttons.red .close {
    background: linear-gradient(#dfa08c, #c8442a 50%, #cf5a34);
}

.toolbar {
    display: flex;
    align-items: center;
    gap: 13px;
    height: 36px;
    padding: 0 11px 0 10px;
    background: linear-gradient(#f9f9f9, #e3e3e3);
    border-bottom: 1px solid #9b9b9b;
}

.omnibox {
    flex: 1;
    display: flex;
    align-items: center;
    min-width: 0;
    height: 27px;
    margin-left: -3px;
    padding: 0 4px 0 1px;
    background: #fff;
    border: 1px solid #b0b0b0;
    border-radius: 3px;
    font-size: 15px;
}

.badge {
    flex: none;
    display: flex;
    align-items: center;
    gap: 6px;
    width: 181px;
    height: 23px;
    padding-left: 5px;
    border: 1px solid #6fb973;
    border-radius: 2px;
    background: linear-gradient(#ecf7ec, #c5e8c5);
    color: #118a18;
    font-size: 14px;
    white-space: nowrap;
}

.url {
    flex: 1;
    margin: 0 4px;
    overflow: hidden;
    white-space: nowrap;
    color: #808080;
    text-decoration: none;
}

.url em {
    font-style: normal;
    color: #118a18;
}

.url b {
    font-weight: 400;
    color: #000;
}

.viewport {
    flex: 1;
    display: flex;
    min-height: 0;
    font-family: "Liberation Sans", Arial, sans-serif;
    color: #000;
}

.survey {
    flex: 1;
    overflow: hidden;
}

.survey h1, .survey h2 {
    height: 42px;
    padding-left: 10px;
    line-height: 42px;
    font-size: 18px;
    white-space: nowrap;
    overflow: hidden;
}

.survey h1 {
    background: #1a3d68;
    color: #fff;
}

.survey h2 {
    background: #b2cdf3;
    font-weight: 400;
}

.questions {
    padding: 15px 12px 0 20px;
}

.omb {
    font-size: 16px;
    line-height: 19px;
}

.questions h3 {
    margin: 14px 0 3px;
    max-width: 976px;
    font-size: 16px;
    line-height: 23px;
}

.check {
    display: flex;
    align-items: center;
    gap: 8px;
    height: 28px;
    padding-left: 6px;
    font-size: 13px;
    white-space: nowrap;
}

.check input {
    appearance: none;
    width: 19px;
    height: 20px;
    border: 2px solid;
    border-color: #909090 #dcdcdc #dcdcdc #909090;
    background: #fff;
}

.check-other {
    display: block;
    padding-left: 4px;
    font-size: 13px;
    line-height: 28px;
}

.questions .textbox {
    width: 334px;
    height: 25px;
    margin: 1px 0 30px 2px;
    border-color: #555;
}

.questions textarea {
    display: block;
    width: 319px;
    height: 62px;
    margin: 6px 0 31px 2px;
    border: 1px solid #555;
}

.page-scroll {
    width: 16px;
    padding: 2px 3px;
    background: #f0f0f0;
    border-left: 1px solid #d8d8d8;
}

.page-thumb {
    height: 50%;
    background: #bdbdbd;
    border: 1px solid #a0a0a0;
}
```
